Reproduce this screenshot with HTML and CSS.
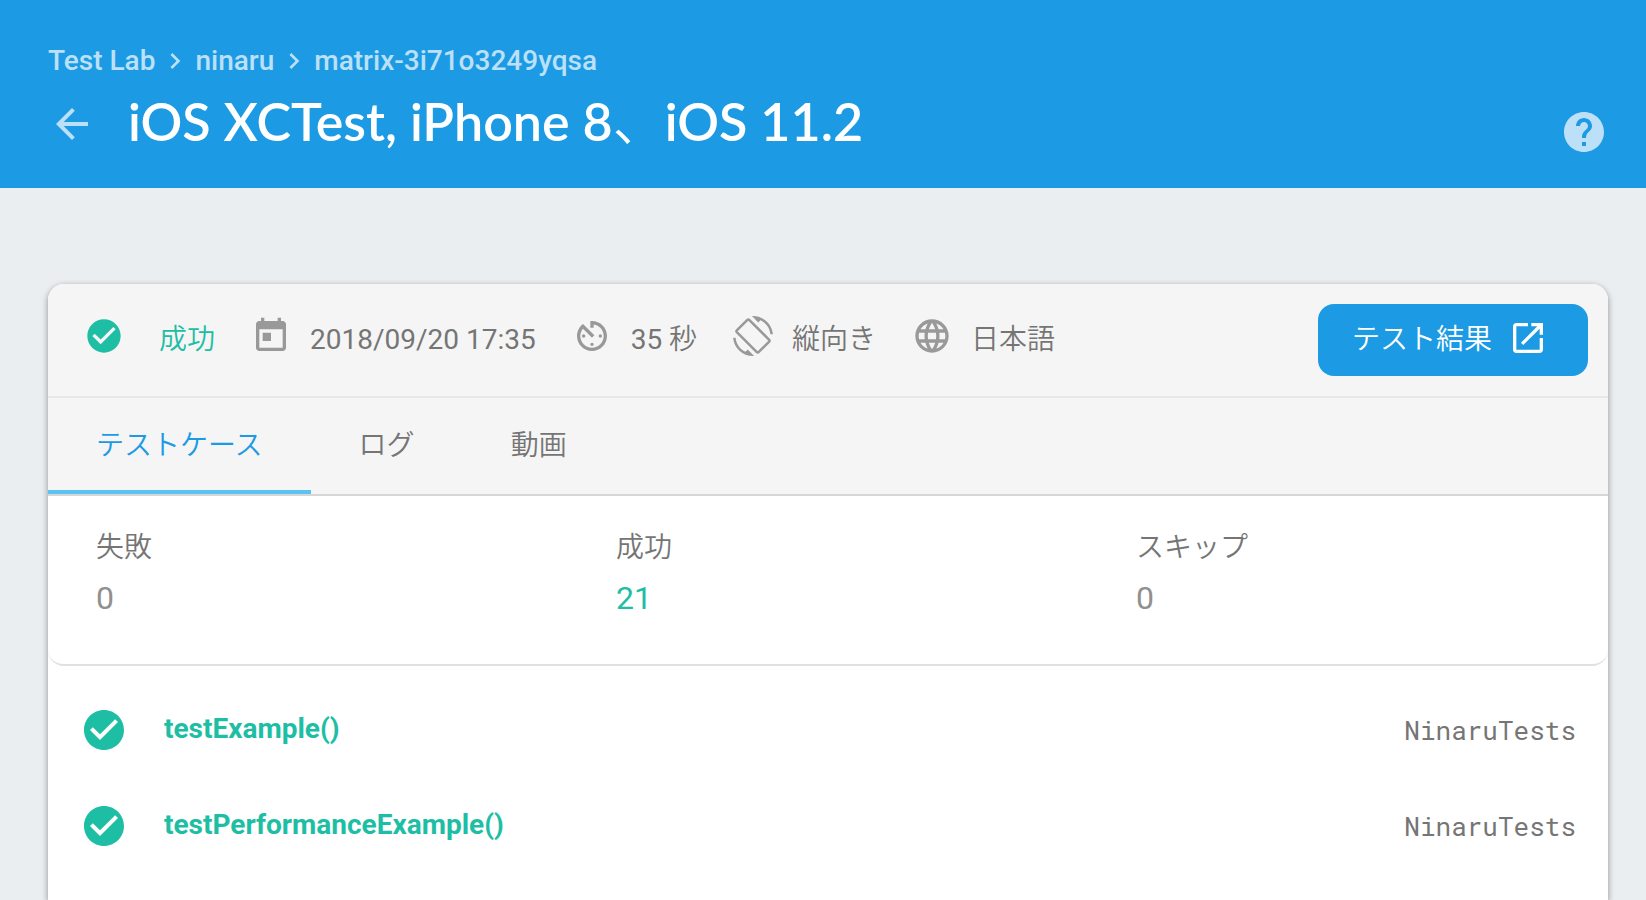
FILE: index.html
```html
<!DOCTYPE html>
<html lang="ja">
<head>
<meta charset="utf-8">
<meta name="viewport" content="width=device-width, initial-scale=1">
<title>iOS XCTest - Test Lab</title>
<link rel="stylesheet" href="styles.css">
</head>
<body>
<svg class="sprite" aria-hidden="true">
  <symbol id="check" viewBox="0 0 24 24"><path d="M12 2C6.480 2 2 6.480 2 12s4.480 10 10 10 10-4.480 10-10S17.520 2 12 2zm-2 15l-5-5 1.410-1.410L10 14.170l7.590-7.590L19 8l-9 9z"/></symbol>
  <symbol id="chevron" viewBox="0 0 24 24"><path d="M10 6L8.590 7.410 13.170 12l-4.580 4.590L10 18l6-6z"/></symbol>
</svg>
<header class="header">
  <nav class="crumbs" aria-label="Breadcrumb">
    <a href="#lab">Test Lab</a>
    <svg class="crumb-sep"><use href="#chevron"/></svg>
    <a href="#ninaru">ninaru</a>
    <svg class="crumb-sep"><use href="#chevron"/></svg>
    <a href="#matrix">matrix-3i71o3249yqsa</a>
  </nav>
  <div class="title-row">
    <button class="icon-button" type="button" aria-label="戻る">
      <svg viewBox="0 0 24 24"><path d="M20 11H7.830l5.590-5.590L12 4l-8 8 8 8 1.410-1.410L7.830 13H20v-2z"/></svg>
    </button>
    <h1 class="title">iOS XCTest, iPhone 8<span class="light">、</span>iOS 11.2</h1>
    <button class="icon-button help" type="button" aria-label="ヘルプ">
      <svg viewBox="0 0 24 24"><path d="M12 2C6.480 2 2 6.480 2 12s4.480 10 10 10 10-4.480 10-10S17.520 2 12 2zm1 17h-2v-2h2v2zm2.070-7.750l-.9.920C13.450 12.900 13 13.500 13 15h-2v-.5c0-1.100.45-2.100 1.170-2.830l1.240-1.260c.37-.36.590-.86.590-1.410 0-1.100-.9-2-2-2s-2 .9-2 2H8c0-2.210 1.790-4 4-4s4 1.790 4 4c0 .88-.36 1.680-.93 2.250z"/></svg>
    </button>
  </div>
</header>
<main class="card">
  <section class="info">
    <span class="fact status"><svg><use href="#check"/></svg>成功</span>
    <span class="fact"><svg viewBox="0 0 24 24"><path d="M19 3h-1V1h-2v2H8V1H6v2H5c-1.110 0-1.990.9-1.990 2L3 19c0 1.100.89 2 2 2h14c1.100 0 2-.9 2-2V5c0-1.100-.9-2-2-2zm0 16H5V8h14v11zM7 10h5v5H7z"/></svg><time class="latin" datetime="2018-09-20T17:35">2018/09/20 17:35</time></span>
    <span class="fact"><svg viewBox="0 0 24 24"><path d="M11 17c0 .55.45 1 1 1s1-.45 1-1-.45-1-1-1-1 .45-1 1zm0-14v4h2V5.080c3.390.49 6 3.390 6 6.920 0 3.870-3.130 7-7 7s-7-3.130-7-7c0-1.680.59-3.220 1.580-4.420L12 13l1.410-1.410-6.800-6.800v.02C4.420 6.450 3 9.050 3 12c0 4.970 4.020 9 9 9 4.970 0 9-4.030 9-9s-4.030-9-9-9h-1zm7 9c0-.55-.45-1-1-1s-1 .45-1 1 .45 1 1 1 1-.45 1-1zM6 12c0 .55.45 1 1 1s1-.45 1-1-.45-1-1-1-1 .45-1 1z"/></svg><span><span class="latin">35</span> 秒</span></span>
    <span class="fact"><svg viewBox="0 0 24 24"><path d="M16.480 2.520c3.270 1.550 5.610 4.720 5.970 8.480h1.500C23.440 4.840 18.290 0 12 0l-.66.030 3.810 3.810 1.330-1.320zm-6.250-.77c-.59-.59-1.540-.59-2.120 0L1.750 8.110c-.59.590-.59 1.540 0 2.120l12.020 12.020c.59.590 1.540.59 2.120 0l6.360-6.360c.59-.59.59-1.540 0-2.120L10.230 1.750zm4.600 19.440L2.810 9.170l6.360-6.360 12.020 12.020-6.360 6.360zm-7.310.29C4.250 19.940 1.910 16.760 1.550 13H.05C.56 19.160 5.710 24 12 24l.66-.03-3.810-3.810-1.330 1.320z"/></svg>縦向き</span>
    <span class="fact"><svg viewBox="0 0 24 24"><path d="M11.990 2C6.470 2 2 6.480 2 12s4.470 10 9.990 10C17.520 22 22 17.520 22 12S17.520 2 11.990 2zm6.930 6h-2.950c-.32-1.250-.78-2.450-1.380-3.560 1.840.63 3.370 1.910 4.330 3.560zM12 4.040c.83 1.200 1.480 2.530 1.910 3.960h-3.820c.43-1.430 1.080-2.760 1.910-3.960zM4.260 14C4.100 13.360 4 12.690 4 12s.1-1.360.26-2h3.380c-.08.660-.14 1.320-.14 2s.06 1.340.14 2H4.260zm.82 2h2.950c.32 1.250.78 2.450 1.380 3.560-1.840-.63-3.370-1.900-4.330-3.560zm2.950-8H5.080c.96-1.660 2.490-2.930 4.330-3.560C8.810 5.550 8.350 6.750 8.030 8zM12 19.960c-.83-1.200-1.480-2.530-1.910-3.960h3.820c-.43 1.430-1.080 2.760-1.910 3.960zM14.340 14H9.660c-.09-.66-.16-1.320-.16-2s.07-1.350.16-2h4.680c.09.650.16 1.320.16 2s-.07 1.340-.16 2zm.25 5.560c.6-1.110 1.060-2.310 1.380-3.560h2.950c-.96 1.650-2.490 2.930-4.330 3.560zM16.360 14c.08-.66.14-1.320.14-2s-.06-1.340-.14-2h3.380c.16.640.26 1.310.26 2s-.1 1.360-.26 2h-3.380z"/></svg>日本語</span>
    <a class="results" href="#results">テスト結果<svg viewBox="0 0 24 24"><path d="M19 19H5V5h7V3H5c-1.110 0-2 .9-2 2v14c0 1.100.89 2 2 2h14c1.100 0 2-.9 2-2v-7h-2v7zM14 3v2h3.590l-9.830 9.830 1.410 1.410L19 6.410V10h2V3h-7z"/></svg></a>
  </section>
  <div class="tabs" role="tablist">
    <button class="tab active" type="button" role="tab" aria-selected="true">テストケース</button>
    <button class="tab" type="button" role="tab" aria-selected="false">ログ</button>
    <button class="tab" type="button" role="tab" aria-selected="false">動画</button>
  </div>
  <dl class="summary">
    <div class="stat"><dt>失敗</dt><dd>0</dd></div>
    <div class="stat"><dt>成功</dt><dd class="passed">21</dd></div>
    <div class="stat"><dt>スキップ</dt><dd>0</dd></div>
  </dl>
  <ul class="cases">
    <li class="case"><svg><use href="#check"/></svg><span class="name">testExample()</span><span class="suite">NinaruTests</span></li>
    <li class="case"><svg><use href="#check"/></svg><span class="name">testPerformanceExample()</span><span class="suite">NinaruTests</span></li>
  </ul>
</main>
</body>
</html>
```
FILE: styles.css
```css
* { box-sizing: border-box; }

body {
  margin: 0;
  min-height: 100vh;
  display: flex;
  flex-direction: column;
  background: #eaeef1;
  color: #757575;
  font: 400 28px/40px Roboto, "Noto Sans CJK JP", sans-serif;
}

svg { display: block; flex: none; fill: currentColor; }
a { color: inherit; text-decoration: none; }
button { border: 0; padding: 0; background: none; color: inherit; font: inherit; cursor: pointer; }
.sprite { position: absolute; width: 0; height: 0; }
.latin { font-weight: 400; }
.light { font-weight: 350; }

.header {
  padding: 41px 38px 29px 48px;
  background: #1c9be4;
  color: #fff;
}
.crumbs {
  display: flex;
  align-items: center;
  gap: 4px;
  color: #bbe0f7;
  font-weight: 500;
}
.crumb-sep { width: 32px; height: 32px; }
.title-row { display: flex; align-items: center; padding-top: 8px; }
.icon-button svg { width: 48px; height: 48px; color: #bbe0f7; }
.title {
  flex: 1;
  margin: 0 0 0 32px;
  padding-bottom: 6px;
  font: 600 52px/64px Lato, "Noto Sans CJK JP", sans-serif;
}
.help { padding-top: 16px; }

.card {
  flex: 1;
  margin: 96px 38px 0 48px;
  background: #fff;
  border-radius: 16px 16px 0 0;
  box-shadow: 0 2px 6px rgba(0, 0, 0, .4);
}
.info {
  display: flex;
  align-items: center;
  gap: 36px;
  padding: 20px 20px 20px 36px;
  background: #f5f5f5;
  border-bottom: 2px solid #e7e7e7;
  border-radius: 16px 16px 0 0;
  font-weight: 350;
}
.fact { display: flex; align-items: center; gap: 19px; }
.fact svg { width: 40px; height: 40px; margin-bottom: 8px; color: #999; }
.status, .fact.status svg { color: #1ebea5; }
.status { gap: 35px; }
.results {
  display: flex;
  align-items: center;
  gap: 16px;
  height: 72px;
  margin-left: auto;
  padding: 0 40px 0 34px;
  border-radius: 16px;
  background: #1c9be4;
  color: #fff;
}
.results svg { width: 40px; height: 40px; margin-bottom: 4px; }

.tabs {
  display: flex;
  background: #f5f5f5;
  border-bottom: 2px solid #d6d6d6;
}
.tab {
  height: 96px;
  padding: 4px 48px 0;
  border-bottom: 4px solid transparent;
  font-weight: 350;
}
.tab.active { color: #1c9be4; border-bottom-color: #58c3f5; }

.summary {
  display: grid;
  grid-template-columns: repeat(3, 1fr);
  margin: 0;
  padding: 32px 0 46px;
  border-bottom: 2px solid #e0e0e0;
  border-radius: 0 0 16px 16px;
}
.stat { padding-left: 48px; }
.stat dt { font-weight: 350; }
.stat dd { margin: 10px 0 0; font-size: 32px; color: #909090; }
.stat .passed { color: #1ebea5; }

.cases { margin: 0; padding: 16px 32px 0; list-style: none; }
.case { display: flex; align-items: center; height: 96px; }
.case svg { width: 48px; height: 48px; color: #1ebea5; }
.name { margin-left: 36px; padding-bottom: 2px; color: #1ebea5; font-weight: 700; }
.suite { margin-left: auto; font-family: "Roboto Mono", "DejaVu Sans Mono", monospace; font-size: 26px; }
```
